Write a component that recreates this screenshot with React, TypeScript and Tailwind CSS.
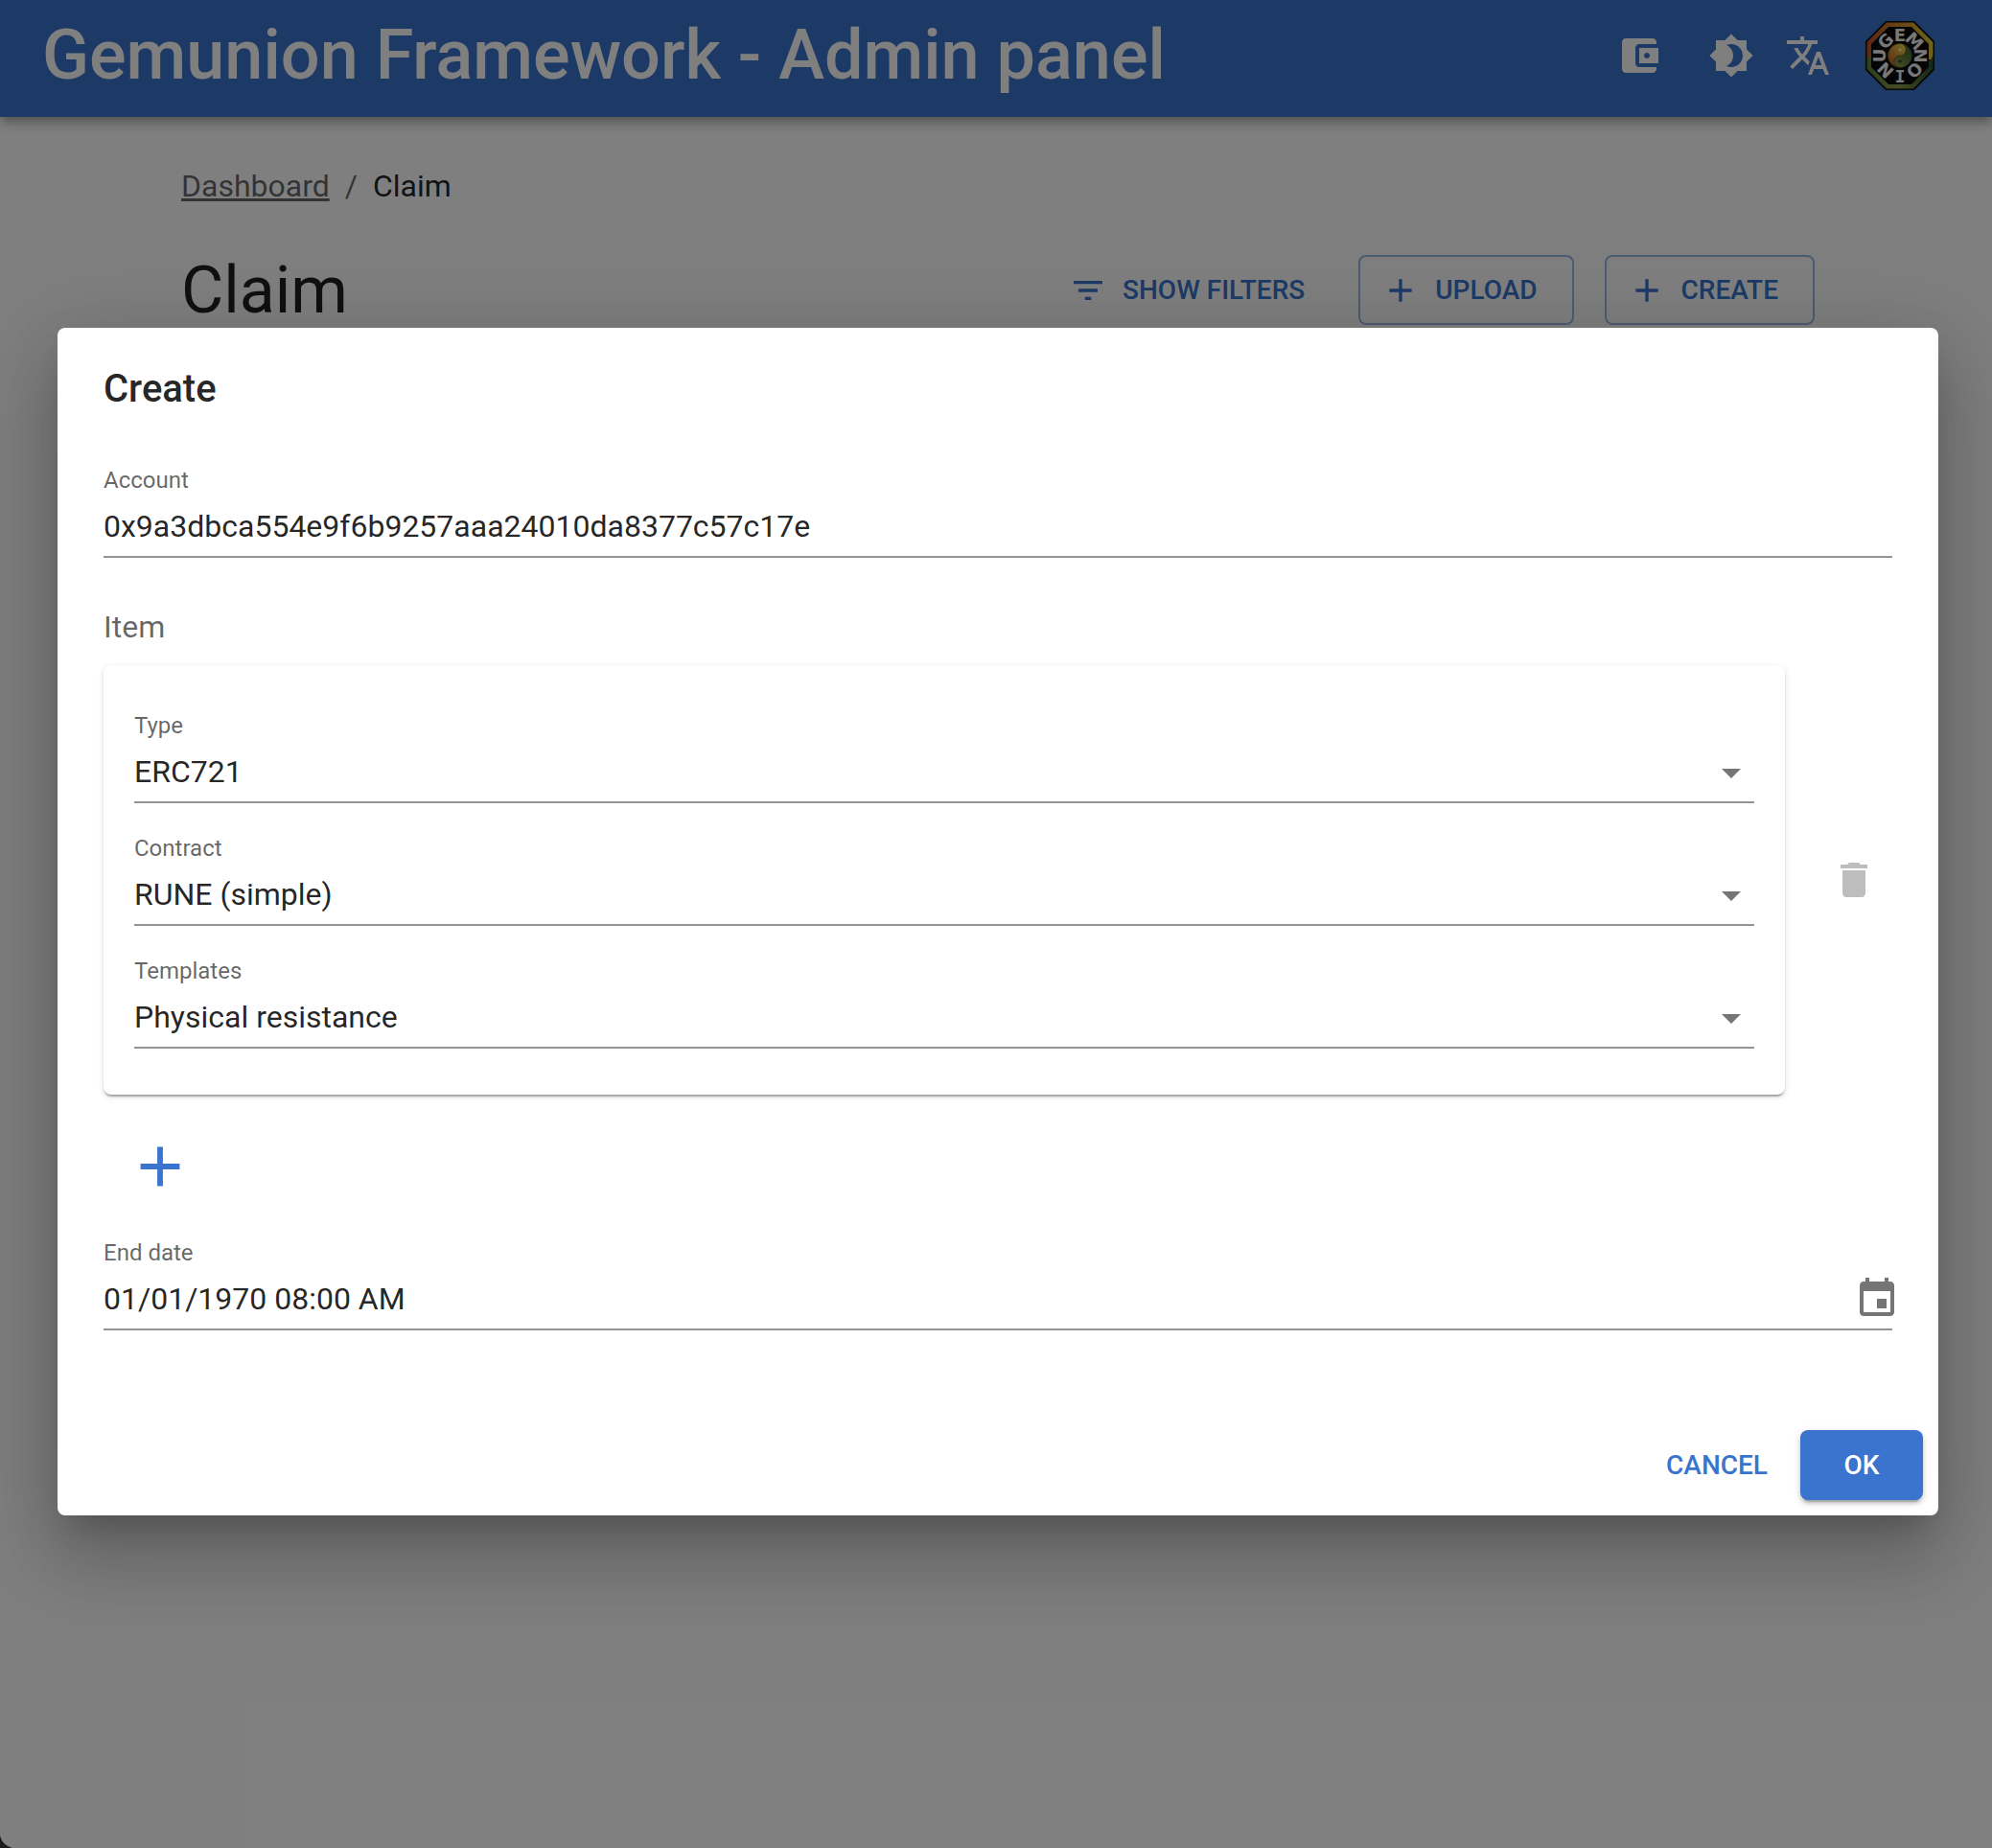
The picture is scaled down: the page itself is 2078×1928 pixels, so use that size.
import React, { useId } from "react";

type IconProps = { d: string; className?: string };

function Icon({ d, className }: IconProps) {
  return (
    <svg viewBox="0 0 24 24" fill="currentColor" aria-hidden="true" className={className}>
      <path d={d} />
    </svg>
  );
}

const icons = {
  wallet:
    "M21 18v1c0 1.1-.9 2-2 2H5c-1.11 0-2-.9-2-2V5c0-1.1.89-2 2-2h14c1.1 0 2 .9 2 2v1h-9c-1.11 0-2 .9-2 2v8c0 1.1.89 2 2 2h9zm-9-2h10V8H12v8zm4-2.5c-.83 0-1.5-.67-1.5-1.5s.67-1.5 1.5-1.5 1.5.67 1.5 1.5-.67 1.5-1.5 1.5z",
  brightness:
    "M20 8.69V4h-4.69L12 .69 8.69 4H4v4.69L.69 12 4 15.31V20h4.69L12 23.31 15.31 20H20v-4.69L23.31 12 20 8.69zM12 18c-.89 0-1.74-.2-2.5-.55C11.56 16.5 13 14.42 13 12s-1.44-4.5-3.5-5.45C10.26 6.2 11.11 6 12 6c3.31 0 6 2.69 6 6s-2.69 6-6 6z",
  translate:
    "M12.87 15.07l-2.54-2.51.03-.03c1.74-1.94 2.98-4.17 3.71-6.53H17V4h-7V2H8v2H1v1.99h11.17C11.5 7.92 10.44 9.75 9 11.35 8.07 10.32 7.3 9.19 6.69 8h-2c.73 1.63 1.73 3.17 2.98 4.56l-5.09 5.02L4 19l5-5 3.11 3.11.76-2.04zM18.5 10h-2L12 22h2l1.12-3h4.75L21 22h2l-4.5-12zm-2.62 7l1.62-4.33L19.12 17h-3.24z",
  filter: "M10 18h4v-2h-4v2zM3 6v2h18V6H3zm3 7h12v-2H6v2z",
  add: "M19 13h-6v6h-2v-6H5v-2h6V5h2v6h6v2z",
  remove: "M6 19c0 1.1.9 2 2 2h8c1.1 0 2-.9 2-2V7H6v12zM19 4h-3.5l-1-1h-5l-1 1H5v2h14V4z",
  event:
    "M17 12h-5v5h5v-5zM16 1v2H8V1H6v2H5c-1.11 0-1.99.9-1.99 2L3 19c0 1.1.89 2 2 2h14c1.1 0 2-.9 2-2V5c0-1.1-.9-2-2-2h-1V1h-2zm3 18H5V8h14v11z",
  dropDown: "M7 10l5 5 5-5z",
};

const ring = [
  { letter: "G", angle: -45 },
  { letter: "E", angle: 0 },
  { letter: "M", angle: 45 },
  { letter: "N", angle: 90 },
  { letter: "O", angle: 135 },
  { letter: "I", angle: 180 },
  { letter: "N", angle: 225 },
  { letter: "U", angle: 270 },
];

function Logo() {
  return (
    <svg viewBox="0 0 72 72" className="size-[72px]" aria-hidden="true">
      <defs>
        <linearGradient id="rim-top" x1="0" y1="0" x2="1" y2="0">
          <stop offset="0" stopColor="#b8502a" />
          <stop offset="0.5" stopColor="#d08a2c" />
          <stop offset="1" stopColor="#d8c83a" />
        </linearGradient>
        <linearGradient id="rim-bottom" x1="0" y1="0" x2="1" y2="0">
          <stop offset="0" stopColor="#5c8038" />
          <stop offset="0.5" stopColor="#86984a" />
          <stop offset="1" stopColor="#2c4c30" />
        </linearGradient>
        <linearGradient id="yin" x1="0" y1="1" x2="0.8" y2="0">
          <stop offset="0.2" stopColor="#c86428" />
          <stop offset="1" stopColor="#ecd048" />
        </linearGradient>
        <linearGradient id="yang" x1="0" y1="1" x2="1" y2="0">
          <stop offset="0" stopColor="#a0a84c" />
          <stop offset="1" stopColor="#2e5a30" />
        </linearGradient>
      </defs>
      <path d="M21 0h30l21 21v30L51 72H21L0 51V21z" fill="#0c0c0c" />
      <path d="M22 1.500h28L70.500 22v18h-69V22z" fill="url(#rim-top)" />
      <path d="M1.500 42q1-5 5-8v14h59V42q4-2 5-8v16L50 70.500H22L1.500 50z" fill="url(#rim-bottom)" />
      <path d="M24 6h24l18 18v24L48 66H24L6 48V24z" fill="#0a0a0a" />
      <circle cx="36" cy="36" r="12.500" fill="url(#yang)" />
      <path
        d="M36 23.500A12.500 12.500 0 0 0 36 48.500A6.250 6.250 0 0 1 36 36A6.250 6.250 0 0 0 36 23.500z"
        fill="url(#yin)"
        stroke="#3a3210"
        strokeWidth="0.500"
      />
      <circle cx="36" cy="42" r="1.500" fill="#2e3f20" />
      <circle cx="36" cy="30" r="1.500" fill="#fff3a0" />
      <g fill="#f0f0f0" fontWeight="700" fontSize="18" textAnchor="middle">
        {ring.map(({ letter, angle }, index) => (
          <text
            key={index}
            x="36"
            y="21"
            fontFamily={letter === "I" ? "DejaVu Sans Mono, monospace" : "DejaVu Sans, sans-serif"}
            transform={`rotate(${angle} 36 36)`}
          >
            {letter}
          </text>
        ))}
      </g>
    </svg>
  );
}

function HeaderButton({ label, icon }: { label: string; icon: string }) {
  return (
    <button type="button" aria-label={label} className="rounded-full p-4">
      <Icon d={icon} className="size-12" />
    </button>
  );
}

function Header() {
  return (
    <header className="flex h-[122px] items-center bg-[#3a74ce] pb-1.5 pr-[60px] pl-11 text-white shadow-[0_4px_8px_-2px_rgba(0,0,0,0.2),0_8px_10px_0_rgba(0,0,0,0.14),0_2px_20px_0_rgba(0,0,0,0.12)]">
      <div className="grow text-[72px] leading-[112px] font-medium whitespace-nowrap">
        Gemunion Framework - Admin panel
      </div>
      <div className="flex items-center">
        <HeaderButton label="Wallet" icon={icons.wallet} />
        <div className="ml-4 flex">
          <HeaderButton label="Theme" icon={icons.brightness} />
          <HeaderButton label="Language" icon={icons.translate} />
        </div>
        <button type="button" aria-label="Profile" className="ml-5">
          <Logo />
        </button>
      </div>
    </header>
  );
}

function OutlinedButton({ children }: { children: React.ReactNode }) {
  return (
    <button
      type="button"
      className="flex h-[73px] items-center gap-4 rounded-lg border-2 border-[#3a74ce]/50 pr-9 pl-[22px] text-[28px] leading-[49px] font-medium text-[#3a74ce]"
    >
      <Icon d={icons.add} className="size-10" />
      {children}
    </button>
  );
}

function Page() {
  return (
    <main className="mx-auto w-full max-w-[1800px] pt-12 pr-[46px] pl-[50px]">
      <nav aria-label="Breadcrumb">
        <ol className="flex gap-4 text-[32px] leading-[48px] text-black/60">
          <li>
            <a href="#dashboard" className="underline">
              Dashboard
            </a>
          </li>
          <li aria-hidden="true">/</li>
          <li className="text-black/87">Claim</li>
        </ol>
      </nav>
      <div className="mt-12 flex h-[73px] items-center justify-between">
        <h1 className="text-[68px] leading-[84px] text-black/87">Claim</h1>
        <div className="flex gap-8">
          <button
            type="button"
            className="flex h-[73px] items-center gap-4 pr-6 pl-2 text-[28px] leading-[49px] font-medium text-[#3a74ce]"
          >
            <Icon d={icons.filter} className="size-10" />
            SHOW FILTERS
          </button>
          <OutlinedButton>UPLOAD</OutlinedButton>
          <OutlinedButton>CREATE</OutlinedButton>
        </div>
      </div>
    </main>
  );
}

function TextField({ label, value, children }: { label: string; value: string; children?: React.ReactNode }) {
  const id = useId();
  return (
    <div>
      <label htmlFor={id} className="block h-8 text-2xl leading-[30px] text-black/60">
        {label}
      </label>
      <div className="flex h-16 items-center border-b-2 border-black/42">
        <input
          id={id}
          type="text"
          defaultValue={value}
          className="h-full min-w-0 grow bg-transparent text-[32px] text-black/87 outline-none"
        />
        {children}
      </div>
    </div>
  );
}

function SelectField({ label, value }: { label: string; value: string }) {
  const id = useId();
  return (
    <div>
      <label htmlFor={id} className="block h-8 text-2xl leading-[30px] text-black/60">
        {label}
      </label>
      <div className="relative h-16 border-b-2 border-black/42">
        <select
          id={id}
          defaultValue={value}
          className="block h-full w-full appearance-none bg-transparent text-[32px] text-black/87 outline-none"
        >
          <option>{value}</option>
        </select>
        <Icon d={icons.dropDown} className="pointer-events-none absolute top-2 right-0 size-12 text-black/54" />
      </div>
    </div>
  );
}

function CreateDialog() {
  return (
    <div className="absolute inset-0 flex items-center bg-black/50 pr-14 pb-[5px] pl-[60px]">
      <form
        role="dialog"
        aria-labelledby="dialog-title"
        className="w-full rounded-lg bg-white text-black/87 shadow-[0_22px_30px_-14px_rgba(0,0,0,0.2),0_48px_76px_6px_rgba(0,0,0,0.14),0_18px_92px_16px_rgba(0,0,0,0.12)]"
      >
        <h2 id="dialog-title" className="px-12 py-8 text-[40px] leading-[64px] font-medium">
          Create
        </h2>
        <div className="px-12 pt-4 pb-[88px]">
          <TextField label="Account" value="0x9a3dbca554e9f6b9257aaa24010da8377c57c17e" />
          <fieldset>
            <legend className="pt-12 text-[32px] leading-[48px] text-black/60">Item</legend>
            <div className="mt-4 flex items-center gap-8">
              <div className="flex grow flex-col gap-8 rounded-lg px-8 py-12 shadow-[0_4px_2px_-2px_rgba(0,0,0,0.2),0_2px_2px_0_rgba(0,0,0,0.14),0_2px_6px_0_rgba(0,0,0,0.12)]">
                <SelectField label="Type" value="ERC721" />
                <SelectField label="Contract" value="RUNE (simple)" />
                <SelectField label="Templates" value="Physical resistance" />
              </div>
              <button type="button" aria-label="Delete item" disabled className="p-4 text-black/26">
                <Icon d={icons.remove} className="size-12" />
              </button>
            </div>
            <button type="button" aria-label="Add item" className="mt-4 block p-6 text-[#3a74ce]">
              <Icon d={icons.add} className="size-[70px]" />
            </button>
          </fieldset>
          <div className="mt-4">
            <TextField label="End date" value="01/01/1970 08:00 AM">
              <button type="button" aria-label="Choose date" className="-mr-2 text-black/54">
                <Icon d={icons.event} className="size-12" />
              </button>
            </TextField>
          </div>
        </div>
        <div className="flex justify-end gap-4 p-4 text-[28px] leading-[49px] font-medium">
          <button type="button" className="h-[73px] min-w-[142px] rounded-lg px-4 text-[#3a74ce]">
            CANCEL
          </button>
          <button
            type="submit"
            className="h-[73px] min-w-32 rounded-lg bg-[#3a74ce] px-8 text-white shadow-[0_6px_2px_-4px_rgba(0,0,0,0.2),0_4px_4px_0_rgba(0,0,0,0.14),0_2px_10px_0_rgba(0,0,0,0.12)]"
          >
            OK
          </button>
        </div>
      </form>
    </div>
  );
}

export default function App() {
  return (
    <div className="bg-[#1c1c1c] font-['Roboto',sans-serif]">
      <div className="relative min-h-screen overflow-hidden rounded-bl-2xl bg-white">
        <Header />
        <Page />
        <CreateDialog />
      </div>
    </div>
  );
}
